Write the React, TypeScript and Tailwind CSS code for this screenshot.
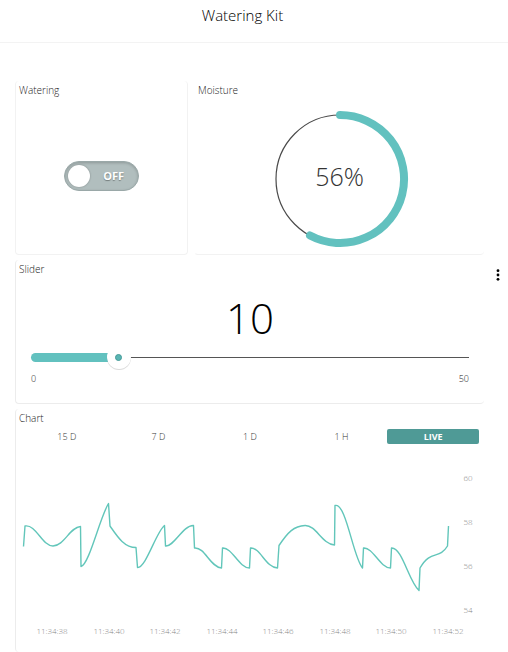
import { useState, type ReactNode } from "react";

const RANGES = ["15 D", "7 D", "1 D", "1 H", "LIVE"];

const Y_TICKS = [
  { label: "60", y: 19 },
  { label: "58", y: 63 },
  { label: "56", y: 107 },
  { label: "54", y: 151 },
];

const X_TICKS = [
  { label: "11:34:38", x: 36 },
  { label: "11:34:40", x: 93 },
  { label: "11:34:42", x: 149 },
  { label: "11:34:44", x: 206 },
  { label: "11:34:46", x: 262 },
  { label: "11:34:48", x: 319 },
  { label: "11:34:50", x: 375 },
  { label: "11:34:52", x: 432 },
];

const SERIES =
  "M7.5 86.5 L9 66 C20 64 26 86 37 86 C48 86 54 67 64.5 66.5 L65 106.5 C73 105 84 57 92.5 43.5 L94 66 C101 76 108 87.5 120 87.5 L121.5 107.5 C130 108 140 72 148.5 65.5 L149.5 86 C158 87 167 65 177.5 65.5 L178.5 88 C189 87 194 107 205.5 108 L206.5 88 C216 87 223 108 233.5 108 L234.5 88 C244 87 250 108 261.5 108 L263 85.5 C272 72 278 66 289 65.5 C300 65 306 84 318.5 85 L319 45.5 C330 42 337 97 346.5 108 L347.5 88 C357 87 364 108 374.5 108 L375.5 88 C386 87 393 122 403 130.5 L404 108 C415 89 423 100 431.5 86 L432.5 66";

function Card({ title, className, children }: { title: string; className: string; children: ReactNode }) {
  return (
    <section className={`flex flex-col rounded-sm border-l border-[#ececec] px-[3px] ${className}`}>
      <h2 className="pt-px text-[10px] leading-4 text-[#222]">{title}</h2>
      {children}
    </section>
  );
}

function Toggle() {
  const [on, setOn] = useState(false);
  return (
    <label
      className={`flex h-[30px] w-[75px] cursor-pointer items-center justify-between rounded-full border border-[#9aa8a8] px-[3px] shadow-[inset_0_1px_3px_rgba(0,0,0,0.2)] ${
        on ? "flex-row-reverse bg-[#62c1bf]" : "bg-[#b1bebe]"
      }`}
    >
      <input
        type="checkbox"
        role="switch"
        aria-label="Watering"
        className="sr-only"
        checked={on}
        onChange={(e) => setOn(e.target.checked)}
      />
      <span className="size-[22px] rounded-full bg-white shadow-[0_0_2px_rgba(0,0,0,0.3)]" />
      <span className="px-[11px] text-[11px] leading-4 font-bold text-white [text-shadow:0_1px_1px_rgba(0,0,0,0.35)]">
        {on ? "ON" : "OFF"}
      </span>
    </label>
  );
}

function Gauge() {
  return (
    <div className="relative flex items-center justify-center">
      <svg viewBox="0 0 138 138" className="size-[138px]" fill="none" aria-hidden="true">
        <circle cx="69" cy="69" r="64" stroke="#4a4a4a" strokeWidth="1.2" />
        <path d="M69 5 A64 64 0 1 1 39 125.500" stroke="#62c1bf" strokeWidth="8" strokeLinecap="round" />
      </svg>
      <span className="absolute pb-1.5 text-[25px] leading-8 text-[#333]">56%</span>
    </div>
  );
}

function WaterSlider({ value, onChange }: { value: number; onChange: (v: number) => void }) {
  const percent = `${(value / 50) * 100}%`;
  return (
    <div className="relative flex h-6 items-center">
      <div className="h-px w-full bg-[#555]" />
      <div className="absolute left-0 h-[9px] rounded-l-full bg-[#62c1bf]" style={{ width: percent }} />
      <div
        className="absolute flex size-6 -translate-x-1/2 items-center justify-center rounded-full bg-white shadow-[0_1px_0_rgba(0,0,0,0.15)]"
        style={{ left: percent }}
      >
        <span className="size-[7px] rounded-full border border-[#459a98] bg-[#5ab5b3]" />
      </div>
      <input
        type="range"
        min={0}
        max={50}
        value={value}
        aria-label="Slider"
        onChange={(e) => onChange(Number(e.target.value))}
        className="absolute inset-0 w-full cursor-pointer opacity-0"
      />
    </div>
  );
}

function Chart() {
  return (
    <svg viewBox="0 0 468 182" className="w-full" role="img" aria-label="Moisture over time">
      <path d={SERIES} fill="none" stroke="#62c6ba" strokeWidth="1.4" strokeLinejoin="round" />
      <g fontSize="8" fill="#888" textAnchor="middle">
        {Y_TICKS.map((t) => (
          <text key={t.label} x="452" y={t.y + 2}>
            {t.label}
          </text>
        ))}
        {X_TICKS.map((t) => (
          <text key={t.label} x={t.x} y="174">
            {t.label}
          </text>
        ))}
      </g>
    </svg>
  );
}

export default function App() {
  const [amount, setAmount] = useState(10);
  const [range, setRange] = useState("LIVE");

  return (
    <div className="flex min-h-screen flex-col bg-white font-['Open_Sans',sans-serif] font-light">
      <header className="flex h-[43px] justify-center border-b border-[#f3f3f3] pt-[3px] pr-[23px]">
        <h1 className="text-[15px] leading-6 text-black">Watering Kit</h1>
      </header>

      <div className="flex flex-1 pt-[38px] pl-[15px]">
        <main className="flex min-w-0 flex-1 flex-col gap-[5px]">
          <div className="grid grid-cols-[173fr_290fr] gap-1.5">
            <Card title="Watering" className="h-[174px] border-r border-b border-[#f2f2f2]">
              <div className="flex justify-center pt-[63px]">
                <Toggle />
              </div>
            </Card>
            <Card title="Moisture" className="h-[174px] border-b border-l-transparent border-b-[#f2f2f2]">
              <div className="flex justify-center pt-3">
                <Gauge />
              </div>
            </Card>
          </div>

          <Card title="Slider" className="h-36 border-b">
            <output className="block pt-3.5 text-center text-[42px] leading-[54px] text-black">{amount}</output>
            <div className="px-3">
              <WaterSlider value={amount} onChange={setAmount} />
              <div className="flex justify-between text-[9px] leading-5 text-[#222]">
                <span>0</span>
                <span>50</span>
              </div>
            </div>
          </Card>

          <Card title="Chart" className="flex-1">
            <div className="grid grid-cols-5 px-0.5 pt-[3px]">
              {RANGES.map((r) => (
                <button
                  key={r}
                  type="button"
                  aria-pressed={range === r}
                  onClick={() => setRange(r)}
                  className={`h-[15px] rounded-xs text-[9px] leading-[15px] ${
                    range === r ? "bg-[#4f9a96] font-bold text-white" : "text-[#333]"
                  }`}
                >
                  {r}
                </button>
              ))}
            </div>
            <div className="-mx-[3px] pt-4">
              <Chart />
            </div>
          </Card>
        </main>

        <aside className="w-[24px] pt-[184px]">
          <button type="button" aria-label="More options" className="flex h-5 w-full items-center justify-center pl-1">
            <svg viewBox="0 0 4 12" className="h-3 w-1" fill="#000" aria-hidden="true">
              <circle cx="2" cy="1.700" r="1.400" />
              <circle cx="2" cy="6" r="1.400" />
              <circle cx="2" cy="10.300" r="1.400" />
            </svg>
          </button>
        </aside>
      </div>
    </div>
  );
}
